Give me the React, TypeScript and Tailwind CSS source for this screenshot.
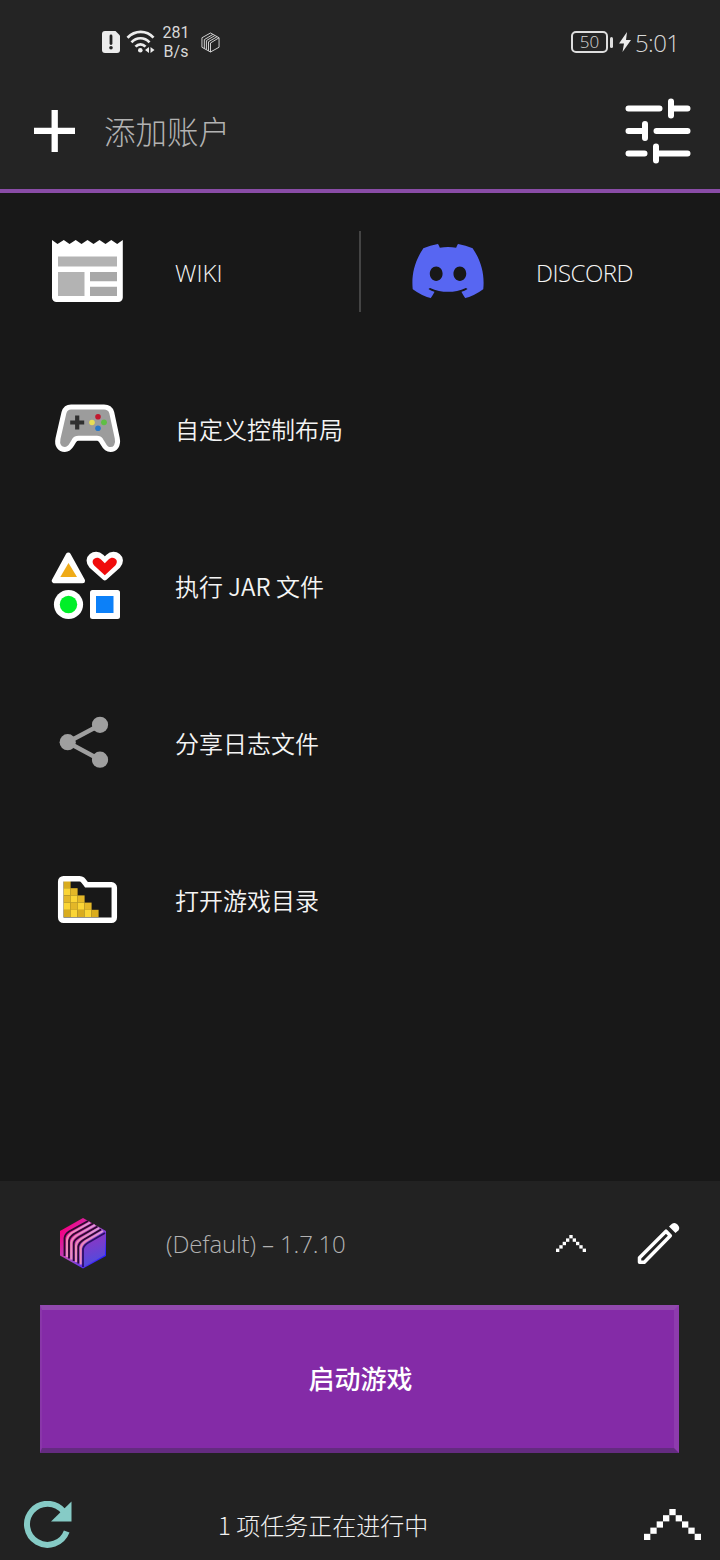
import type { ReactNode } from "react";
import { FaDiscord } from "react-icons/fa";

function PixelChevron({ className }: { className: string }) {
  const cells = [4, 3, 2, 1, 0, 1, 2, 3, 4];
  return (
    <svg viewBox="0 0 9 5" preserveAspectRatio="none" fill="#fff" className={className}>
      {cells.map((y, x) => (
        <rect key={x} x={x} y={y} width="1" height="1" />
      ))}
    </svg>
  );
}

function WifiIcon() {
  return (
    <svg viewBox="126 28 30 26" className="ml-[6px] h-[26px] w-[30px]" fill="none" stroke="#ececec" strokeWidth="2.7">
      <path d="M127.5 36.7C135 28.8 146.5 28.8 153.5 36.7" />
      <path d="M131.5 41.3C136.500 35.900 144.500 35.900 149.500 41.300" />
      <path d="M135.500 45.700C138.500 42.500 142.500 42.500 145.500 45.700" />
      <circle cx="140.300" cy="49.300" r="2.300" fill="#ececec" stroke="none" />
      <path d="M149 46v6l-4-3zM150.500 46v6l4-3z" fill="#ececec" stroke="none" />
    </svg>
  );
}

function StatusBar() {
  return (
    <div className="flex h-[84px] items-center pr-[41px] pl-[102px] text-[#d8d8d8]">
      <svg viewBox="0 0 18 22" className="h-[22px] w-[18px]">
        <path d="M3 0H13.500L18 4.500V19a3 3 0 0 1-3 3H3a3 3 0 0 1-3-3V3a3 3 0 0 1 3-3z" fill="#ececec" />
        <path d="M9 5v7.500" stroke="#242424" strokeWidth="2.800" strokeLinecap="round" />
        <circle cx="9" cy="16.800" r="1.800" fill="#242424" />
      </svg>
      <WifiIcon />
      <div className="ml-[6px] w-[28px] text-center font-[Roboto] text-[16px] leading-[19px]">
        <div>281</div>
        <div>B/s</div>
      </div>
      <svg viewBox="0 0 20 22" className="ml-[11px] h-[21px] w-[19px]" fill="none" stroke="#d8d8d8" strokeWidth="1">
        <path d="M10 1L19 6V16L10 21L1 16V6z" />
        <path d="M10 21V11.500L19 6M3.500 17.500V8L12.500 2.500M5.700 18.500V9L14.500 3.800M7.900 19.800V10.200L16.800 5" />
      </svg>
      <div className="ml-auto flex items-center">
        <div className="flex h-[22px] w-[37px] items-center justify-center rounded-[5px] border-2 border-[#dedede] font-['Open_Sans'] text-[17px] font-light">
          50
        </div>
        <div className="ml-[2px] h-[11px] w-[3px] rounded-full bg-[#dedede]" />
        <svg viewBox="0 0 12 20" className="ml-[6px] h-[20px] w-[12px]" fill="#ececec">
          <path d="M8 0L0 11.500H5L3.500 20L12 8H7z" />
        </svg>
        <span className="ml-[4px] w-[44px] pt-[2px] font-['Open_Sans'] text-[24px] leading-none font-light tracking-[-0.6px] whitespace-nowrap">5:01</span>
      </div>
    </div>
  );
}

function TuneIcon() {
  return (
    <svg viewBox="625 98 66 66" className="ml-auto h-[66px] w-[66px]" stroke="#fff" strokeWidth="6" strokeLinecap="round">
      <path d="M628.500 108.500H659.500M671 101.500V115.500M671 108.500H687.500" />
      <path d="M628.500 131H645M645 124V138M656.500 131H687.500" />
      <path d="M628.500 153.500H644.500M656 146.500V160.500M656 153.500H687.500" />
    </svg>
  );
}

function AccountBar() {
  return (
    <div className="flex h-[105px] items-start pt-[14px] pr-[29px] pl-[34px]">
      <svg viewBox="0 0 41 42" className="mt-[12px] h-[42px] w-[41px]" stroke="#fff" strokeWidth="6.300">
        <path d="M20.700 0V42M0 20.800H41" />
      </svg>
      <span className="ml-[29px] pt-[8px] text-[31.5px] leading-[48px] font-light text-[#b2b2b2]">添加账户</span>
      <TuneIcon />
    </div>
  );
}

function WikiIcon() {
  return (
    <svg viewBox="51 236 72 71" className="h-[71px] w-[72px]">
      <path
        d="M52 240L57.500 244L63.800 240L69.500 244L75.700 240L81.500 244L87.500 240L93.500 244L99.500 240L105.500 244L111.300 240L117.200 244L122.800 240V297.500A4.500 4.500 0 0 1 118.300 302H56.500A4.500 4.500 0 0 1 52 297.500z"
        fill="#fff"
      />
      <path d="M58 256.500H117V266.500H58zM58 272H84.500V296H58z" fill="#b3b3b3" />
      <path d="M90 272H117V281.300H90zM90 286.700H117V296H90z" fill="#a8a8a8" />
    </svg>
  );
}

function ControllerIcon() {
  return (
    <svg viewBox="51 393 72 71" className="h-[71px] w-[72px]">
      <path
        d="M71 407H104C108.500 407 110.700 409.200 111.700 412.500L117.200 438C118.800 445.500 115 449.500 110.500 449.500C107 449.500 105 447.500 103.500 444.500L101 440.500C100 439 98.500 438.300 97 438.300H78.500C76.500 438.300 75.200 439 74.200 440.500L71.800 444.500C70 447.500 68 449.500 64.800 449.500C60 449.500 56.500 445.500 58 438.500L64 412.500C65 409.200 67 407 71 407z"
        fill="#9c9c9c"
        stroke="#fff"
        strokeWidth="5"
      />
      <path d="M77.200 415.500V429.500M70.200 422.500H84.200" stroke="#2f2f2f" strokeWidth="4.200" />
      <circle cx="98" cy="416.700" r="2.800" fill="#c2182f" />
      <circle cx="92" cy="422.500" r="2.800" fill="#e8de55" />
      <circle cx="104" cy="422.300" r="2.900" fill="#5fbf45" />
      <circle cx="98" cy="428.200" r="2.800" fill="#2878c8" />
    </svg>
  );
}

function ShapesIcon() {
  return (
    <svg viewBox="51 550 72 71" className="h-[71px] w-[72px]">
      <path d="M68.300 555L54.300 580.700H82.500z" fill="#fff" stroke="#fff" strokeWidth="5" strokeLinejoin="round" />
      <path d="M68.500 563L60.300 577H77z" fill="#efab18" />
      <path
        d="M104.800 578L91.300 565.800C84.500 558 95 550.500 101.500 556.500L104.800 560L108.200 556.500C114.500 550.500 125 558 118.200 565.800z"
        fill="#fff"
        stroke="#fff"
        strokeWidth="5"
        strokeLinejoin="round"
      />
      <path
        d="M104.800 575.200L94.200 565.500C89.500 560 96.500 555 101 559.500L104.800 563.300L108.500 559.500C113 555 120 560 115.300 565.500z"
        fill="#f00c0c"
      />
      <circle cx="68.500" cy="604.500" r="14.600" fill="#fff" />
      <circle cx="68.500" cy="604.500" r="8.700" fill="#00ef28" />
      <rect x="90" y="590" width="30" height="29" rx="2.500" fill="#fff" />
      <rect x="96" y="596" width="17.500" height="17" fill="#0c80f8" />
    </svg>
  );
}

function ShareIcon() {
  return (
    <svg viewBox="51 707 72 71" className="h-[71px] w-[72px]" fill="#9f9f9f">
      <path d="M100 725L67.500 742.200L100 759.700" fill="none" stroke="#9f9f9f" strokeWidth="4.500" />
      <circle cx="100" cy="724.800" r="8.100" />
      <circle cx="67.700" cy="742.200" r="8.100" />
      <circle cx="100" cy="759.700" r="8.100" />
    </svg>
  );
}

function FolderIcon() {
  const colors = ["#d9ac1e", "#fbd535", "#e3b728"];
  return (
    <svg viewBox="51 864 72 71" className="h-[71px] w-[72px]">
      {[1, 2, 3, 4, 5].map((count, row) =>
        Array.from({ length: count }, (_, col) => (
          <rect
            key={`${row}-${col}`}
            x={63.5 + col * 7}
            y={881 + row * 7.2}
            width="7.100"
            height="7.300"
            fill={(row + col) % 2 ? colors[1] : colors[(row + col * 2) % 4 ? 2 : 0]}
          />
        )),
      )}
      <path
        d="M63.500 878.700H79.500C82 878.700 82.500 879.500 86.500 884.800H111.500A2.800 2.800 0 0 1 114.300 887.600V917.500A2.800 2.800 0 0 1 111.500 920.300H63.500A2.800 2.800 0 0 1 60.700 917.500V881.500A2.800 2.800 0 0 1 63.500 878.700z"
        fill="none"
        stroke="#fff"
        strokeWidth="5.500"
      />
    </svg>
  );
}

function MenuItem({ icon, label }: { icon: ReactNode; label: ReactNode }) {
  return (
    <div className="flex h-[157px] items-start pt-[43px] pl-[51px]">
      {icon}
      <span className="ml-[52px] text-[24px] leading-[71px] font-[350] whitespace-nowrap text-[#f4f4f4]">{label}</span>
    </div>
  );
}

function Menu() {
  return (
    <main className="flex h-[988px] flex-col">
      <div className="flex">
        <div className="w-[359px]">
          <MenuItem icon={<WikiIcon />} label={<span className="font-['Open_Sans']">WIKI</span>} />
        </div>
        <div className="mt-[38px] h-[81px] w-[2px] bg-[#444]" />
        <MenuItem
          icon={<FaDiscord className="mt-[4px] -mr-[3px] -ml-[3px] h-[62px] w-[78px] text-[#5766f2]" />}
          label={<span className="font-['Open_Sans'] tracking-[-0.5px]">DISCORD</span>}
        />
      </div>
      <MenuItem icon={<ControllerIcon />} label="自定义控制布局" />
      <MenuItem icon={<ShapesIcon />} label="执行 JAR 文件" />
      <MenuItem icon={<ShareIcon />} label="分享日志文件" />
      <MenuItem icon={<FolderIcon />} label="打开游戏目录" />
    </main>
  );
}

function CubeIcon() {
  return (
    <svg viewBox="59 1217 48 53" className="h-[53px] w-[48px]">
      <defs>
        <linearGradient id="cube" x1="0" y1="0" x2="1" y2="1">
          <stop offset="0.150" stopColor="#f50084" />
          <stop offset="0.500" stopColor="#b04fc4" />
          <stop offset="0.850" stopColor="#2d20ff" />
        </linearGradient>
        <linearGradient id="side" x1="0.300" y1="0" x2="0.500" y2="1">
          <stop offset="0" stopColor="#9433c0" />
          <stop offset="1" stopColor="#4a4ee0" />
        </linearGradient>
        <linearGradient id="slat" x1="0" y1="0" x2="1" y2="0.500">
          <stop offset="0" stopColor="#f585a8" />
          <stop offset="1" stopColor="#d9a0e6" />
        </linearGradient>
      </defs>
      <path d="M83 1218L106 1231V1256L83 1268.500L60 1255.500V1231z" fill="url(#cube)" />
      <path d="M83.500 1246L105 1233V1255L83.500 1267z" fill="url(#side)" />
      <g fill="none" stroke="#2b0a2c" strokeWidth="1.800">
        <path d="M64.500 1256V1238Q65 1234 69 1231.500L88 1221" />
        <path d="M69 1258.500V1241Q69.500 1237 74 1234L93 1223.500" />
        <path d="M73.700 1261V1243.500Q74 1240 79 1237L97.500 1226.500" />
        <path d="M78.300 1263.500V1246.500Q79 1242.500 84 1239.500L101 1229.500" />
        <path d="M83 1267V1249Q84 1245 88.500 1242.500L105 1233" stroke="#2a1068" />
      </g>
      <g fill="none" stroke="url(#slat)" strokeWidth="2">
        <path d="M67 1257V1240Q67.500 1236 71.500 1233L90 1222.500" />
        <path d="M71.300 1259.500V1242.500Q72 1238.500 76.500 1235.500L95 1225" />
        <path d="M76 1262V1245.500Q76.500 1241.500 81.500 1238.500L99 1228" />
        <path d="M80.700 1264.500V1248Q81.500 1244 86 1241L103 1231" />
      </g>
    </svg>
  );
}

function PencilIcon() {
  return (
    <svg viewBox="637 1221 43 43" className="ml-[51px] h-[43px] w-[43px]">
      <path
        d="M666 1230.200L670.300 1234.800L644.300 1261.300H639.500V1256.700z"
        fill="none"
        stroke="#fff"
        strokeWidth="3.500"
        strokeLinejoin="round"
      />
      <path d="M669 1225.500L672 1222.800Q675 1221 677.700 1223.700Q680.300 1226.500 678.500 1229.300L675.500 1232z" fill="#fff" />
    </svg>
  );
}

function VersionRow() {
  return (
    <div className="flex h-[124px] items-center pr-[40px] pl-[59px]">
      <CubeIcon />
      <span className="ml-[59px] pt-px font-['Open_Sans'] text-[24px] font-light tracking-[-0.1px] whitespace-nowrap text-[#b2b2b2]">
        (Default) – 1.7.10
      </span>
      <PixelChevron className="ml-auto h-[17px] w-[30px]" />
      <PencilIcon />
    </div>
  );
}

function PlayButton() {
  return (
    <button className="mx-[40px] h-[148px] w-[639px] border-t-[5px] border-r-[5px] border-b-[5px] border-l-2 border-t-[#9149ae] border-r-[#8e3bae] border-b-[#642b80] border-l-[#8a36aa] bg-[#842ba7] pb-[3px] pl-[5px] text-[26px] font-medium text-white">
      启动游戏
    </button>
  );
}

function TaskBar() {
  return (
    <div className="flex h-[107px] items-start pt-[47px] pr-[19px] pl-[23px]">
      <svg viewBox="0 0 49 49" className="mt-px h-[49px] w-[49px]" fill="none" stroke="#86cbc6" strokeWidth="6">
        <path d="M40.500 10.500A20.500 20.500 0 1 0 43.700 30.500" />
        <path d="M48.500 0.500V20.500H28z" fill="#86cbc6" stroke="none" />
      </svg>
      <span className="ml-[146px] text-[24px] leading-[50px] font-light whitespace-nowrap text-[#f0f0f0]">1 项任务正在进行中</span>
      <PixelChevron className="mt-[9px] ml-auto h-[31px] w-[57px]" />
    </div>
  );
}

export default function App() {
  return (
    <div className="flex h-[1560px] w-[720px] flex-col overflow-hidden bg-[#181818] font-['Noto_Sans_CJK_SC','Open_Sans',sans-serif]">
      <header className="h-[193px] border-b-4 border-[#894ca6] bg-[#242424]">
        <StatusBar />
        <AccountBar />
      </header>
      <Menu />
      <footer className="h-[379px] bg-[#222]">
        <VersionRow />
        <PlayButton />
        <TaskBar />
      </footer>
    </div>
  );
}
